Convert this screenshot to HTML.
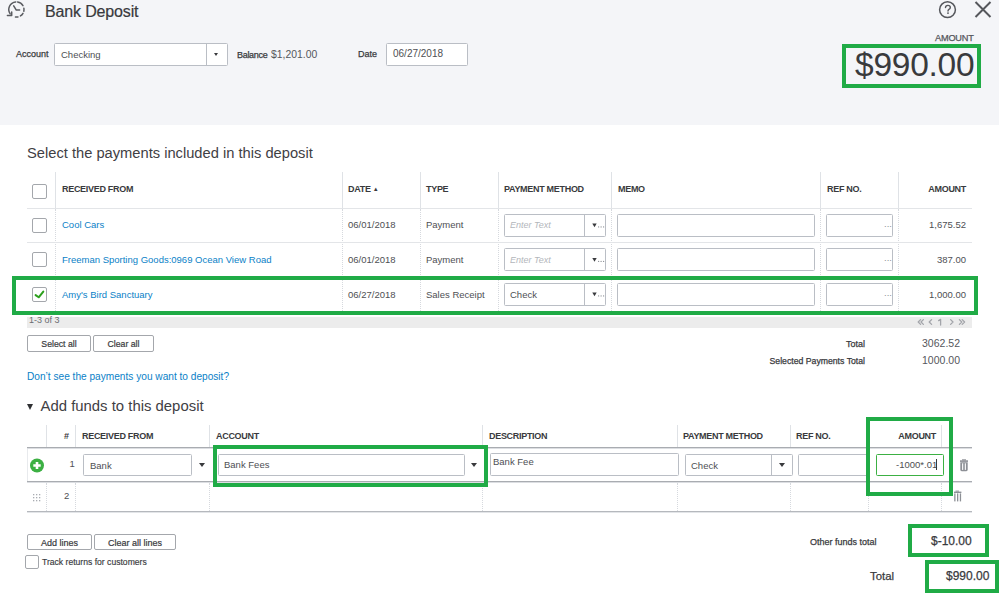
<!DOCTYPE html>
<html><head><meta charset="utf-8">
<style>
*{box-sizing:border-box;margin:0;padding:0}
html,body{width:999px;height:599px;overflow:hidden;background:#fff;font-family:"Liberation Sans",sans-serif;color:#393a3d}
.a{position:absolute;white-space:nowrap}
.r{position:absolute;white-space:nowrap;text-align:right}
#hdr{position:absolute;left:0;top:0;width:999px;height:125px;background:#f4f5f8}
.inp{position:absolute;background:#fff;border:1px solid #babec5;border-radius:1.5px}
.sb{-webkit-text-stroke:0.25px currentColor}
.th{font-size:9px;font-weight:bold;color:#393a3d;letter-spacing:-0.3px}
.td{font-size:9.5px;color:#4e4f53}
.lnk{color:#0a7fc7}
.vl{position:absolute;width:0;border-left:1px dotted #d6d9de}
.vs{position:absolute;width:1px;background:#dfe2e6}
.hl{position:absolute;height:1px;background:#e3e5e8}
.cb{position:absolute;width:15px;height:15px;border:1px solid #a4a7ac;border-radius:2px;background:#fff}
.green{position:absolute;border:4px solid #20ab46}
.btn{position:absolute;border:1px solid #a4a7ac;border-radius:2px;background:#fff;font-size:9px;color:#393a3d;text-align:center;-webkit-text-stroke:0.2px #393a3d}
.arr{position:absolute;width:0;height:0;border-left:3px solid transparent;border-right:3px solid transparent;border-top:4px solid #393a3d}
</style></head><body>
<div id="hdr"></div>

<!-- history icon -->
<svg class="a" style="left:0;top:0" width="30" height="22" viewBox="0 0 30 22">
  <g fill="none" stroke="#595b60" stroke-width="1.5" stroke-linecap="round" stroke-linejoin="round">
    <path d="M15.74 1.93 A7.6 7.6 0 0 0 10.17 13.86"/>
    <path d="M7.4 15.4 H11.7 V12"/>
    <path d="M17.6 1.97 A7.6 7.6 0 0 1 22.98 5.7"/>
    <path d="M23.88 8.18 A7.6 7.6 0 0 1 23.8 11.21"/>
    <path d="M22.98 13.3 A7.6 7.6 0 0 1 20.43 15.95"/>
    <path d="M17.98 16.93 A7.6 7.6 0 0 1 15.47 17.04"/>
    <path d="M13.7 5.9 L16.3 10.1 L19.6 10.1"/>
  </g>
</svg>
<div class="a" style="left:45px;top:3px;font-size:16px;color:#393a3d;letter-spacing:-0.15px;-webkit-text-stroke:0.2px #393a3d">Bank Deposit</div>

<!-- help & close -->
<svg class="a" style="left:937px;top:0" width="22" height="20" viewBox="937 0 22 20">
  <circle cx="947.5" cy="9.7" r="7.9" fill="none" stroke="#55575c" stroke-width="1.5"/>
  <path d="M945.5 7.6 Q945.5 5.4 947.9 5.4 Q950.3 5.4 950.3 7.5 Q950.3 8.7 948.9 9.4 Q948 9.9 948 11" fill="none" stroke="#55575c" stroke-width="1.4" stroke-linecap="round"/>
  <circle cx="948" cy="13.1" r="0.95" fill="#55575c"/>
</svg>
<svg class="a" style="left:972px;top:0" width="24" height="20" viewBox="0 0 24 20">
  <path d="M3.5 2 L18.5 17 M18.5 2 L3.5 17" stroke="#55575c" stroke-width="2"/>
</svg>

<!-- account row -->
<div class="a sb" style="left:16px;top:49px;font-size:9px">Account</div>
<div class="inp" style="left:54px;top:43px;width:174px;height:23px"></div>
<div class="a td" style="left:61px;top:49px">Checking</div>
<div class="a" style="left:206px;top:44px;width:1px;height:21px;background:#babec5"></div>
<div class="arr" style="left:214px;top:53px;border-left-width:2.5px;border-right-width:2.5px;border-top-width:3px"></div>
<div class="a sb" style="left:237px;top:50px;font-size:9px;letter-spacing:-0.3px">Balance</div>
<div class="a" style="left:271px;top:49px;font-size:10.4px;color:#55575c">$1,201.00</div>
<div class="a sb" style="left:358px;top:49px;font-size:9px">Date</div>
<div class="inp" style="left:386px;top:43px;width:82px;height:23px"></div>
<div class="a td" style="left:393px;top:48px;font-size:10px">06/27/2018</div>

<div class="a sb" style="left:935px;top:33px;font-size:9.2px;color:#55575c;letter-spacing:-0.2px">AMOUNT</div>
<div class="green" style="left:842px;top:44px;width:139px;height:44px;border-width:4px"></div>
<div class="a" style="left:855px;top:46px;font-size:33.5px;letter-spacing:-0.25px;color:#393a3d">$990.00</div>

<!-- section 1 -->
<div class="a" style="left:27px;top:145px;font-size:14.7px;color:#3f4044">Select the payments included in this deposit</div>

<!-- table 1 -->
<div class="vs" style="left:55px;top:172px;height:36px"></div><div class="vl" style="left:55px;top:209px;height:104px"></div>
<div class="vs" style="left:342px;top:172px;height:36px"></div><div class="vl" style="left:342px;top:209px;height:104px"></div>
<div class="vs" style="left:420px;top:172px;height:36px"></div><div class="vl" style="left:420px;top:209px;height:104px"></div>
<div class="vs" style="left:498px;top:172px;height:36px"></div><div class="vl" style="left:498px;top:209px;height:104px"></div>
<div class="vs" style="left:611px;top:172px;height:36px"></div><div class="vl" style="left:611px;top:209px;height:104px"></div>
<div class="vs" style="left:820px;top:172px;height:36px"></div><div class="vl" style="left:820px;top:209px;height:104px"></div>
<div class="vs" style="left:898px;top:172px;height:36px"></div><div class="vl" style="left:898px;top:209px;height:104px"></div>
<div class="hl" style="left:27px;top:208px;width:945px"></div>
<div class="hl" style="left:27px;top:242px;width:945px"></div>
<div class="hl" style="left:27px;top:277px;width:945px"></div>

<div class="cb" style="left:32px;top:184px"></div>
<div class="a th" style="left:62px;top:184px">RECEIVED FROM</div>
<div class="a th" style="left:348px;top:184px">DATE <span style="font-size:6px;position:relative;top:-1px">&#9650;</span></div>
<div class="a th" style="left:426px;top:184px">TYPE</div>
<div class="a th" style="left:504px;top:184px">PAYMENT METHOD</div>
<div class="a th" style="left:618px;top:184px">MEMO</div>
<div class="a th" style="left:827px;top:184px">REF NO.</div>
<div class="r th" style="right:33px;top:184px">AMOUNT</div>

<!-- row 1 -->
<div class="cb" style="left:32px;top:218px"></div>
<div class="a td lnk" style="left:62px;top:219px">Cool Cars</div>
<div class="a td" style="left:348px;top:219px">06/01/2018</div>
<div class="a td" style="left:426px;top:219px">Payment</div>
<div class="inp" style="left:504px;top:214px;width:102px;height:23px"></div>
<div class="a" style="left:584px;top:215px;width:1px;height:21px;background:#babec5"></div>
<div class="a" style="left:510px;top:220px;font-style:italic;color:#b3b6bb;font-size:9px">Enter Text</div>
<svg class="a" style="left:590px;top:221px" width="16" height="8" viewBox="590 221 16 8"><path d="M592.3 223.4 H596.7 L594.5 227.3 Z" fill="#393a3d"/><g fill="#8d9096"><circle cx="598.6" cy="226.9" r="0.65"/><circle cx="601.1" cy="226.9" r="0.65"/><circle cx="603.6" cy="226.9" r="0.65"/></g></svg>
<div class="inp" style="left:617px;top:214px;width:198px;height:23px"></div>
<div class="inp" style="left:826px;top:214px;width:67px;height:23px"></div>
<div class="a" style="left:884px;top:218px;color:#8d9096;font-size:9.5px">...</div>
<div class="r td" style="right:33px;top:219px">1,675.52</div>

<!-- row 2 -->
<div class="cb" style="left:32px;top:252px"></div>
<div class="a td lnk" style="left:62px;top:254px">Freeman Sporting Goods:0969 Ocean View Road</div>
<div class="a td" style="left:348px;top:254px">06/01/2018</div>
<div class="a td" style="left:426px;top:254px">Payment</div>
<div class="inp" style="left:504px;top:248px;width:102px;height:23px"></div>
<div class="a" style="left:584px;top:249px;width:1px;height:21px;background:#babec5"></div>
<div class="a" style="left:510px;top:255px;font-style:italic;color:#b3b6bb;font-size:9px">Enter Text</div>
<svg class="a" style="left:590px;top:255px" width="16" height="8" viewBox="590 255 16 8"><path d="M592.3 257.9 H596.7 L594.5 261.8 Z" fill="#393a3d"/><g fill="#8d9096"><circle cx="598.6" cy="261.4" r="0.65"/><circle cx="601.1" cy="261.4" r="0.65"/><circle cx="603.6" cy="261.4" r="0.65"/></g></svg>
<div class="inp" style="left:617px;top:248px;width:198px;height:23px"></div>
<div class="inp" style="left:826px;top:248px;width:67px;height:23px"></div>
<div class="a" style="left:884px;top:252px;color:#8d9096;font-size:9.5px">...</div>
<div class="r td" style="right:33px;top:254px">387.00</div>

<!-- row 3 -->
<div class="cb" style="left:32px;top:287px"></div>
<svg class="a" style="left:32px;top:287px" width="15" height="15" viewBox="0 0 15 15">
  <path d="M3.6 8.1 L6.7 10.3 L11.3 4.6" fill="none" stroke="#2ca01c" stroke-width="2" stroke-linecap="round" stroke-linejoin="round"/>
</svg>
<div class="a td lnk" style="left:62px;top:289px">Amy's Bird Sanctuary</div>
<div class="a td" style="left:348px;top:289px">06/27/2018</div>
<div class="a td" style="left:426px;top:289px">Sales Receipt</div>
<div class="inp" style="left:504px;top:283px;width:102px;height:23px"></div>
<div class="a" style="left:584px;top:284px;width:1px;height:21px;background:#babec5"></div>
<div class="a td" style="left:510px;top:289px">Check</div>
<svg class="a" style="left:590px;top:290px" width="16" height="8" viewBox="590 290 16 8"><path d="M592.3 292.4 H596.7 L594.5 296.3 Z" fill="#393a3d"/><g fill="#8d9096"><circle cx="598.6" cy="295.9" r="0.65"/><circle cx="601.1" cy="295.9" r="0.65"/><circle cx="603.6" cy="295.9" r="0.65"/></g></svg>
<div class="inp" style="left:617px;top:283px;width:198px;height:23px"></div>
<div class="inp" style="left:826px;top:283px;width:67px;height:23px"></div>
<div class="a" style="left:884px;top:287px;color:#8d9096;font-size:9.5px">...</div>
<div class="r td" style="right:33px;top:289px">1,000.00</div>

<div class="green" style="left:12px;top:276px;width:966px;height:39px"></div>

<!-- pagination -->
<div class="a" style="left:27px;top:317px;width:945px;height:11px;background:#ececec"></div>
<div class="a" style="left:29px;top:315px;font-size:9px;color:#6b6c72">1-3 of 3</div>
<svg class="a" style="left:910px;top:316px" width="62" height="12" viewBox="910 316 62 12">
<g fill="none" stroke="#a3a5aa" stroke-width="1.3" stroke-linecap="round" stroke-linejoin="round">
<path d="M920.6 319.6 L918.2 322 L920.6 324.4 M923.4 319.6 L921 322 L923.4 324.4"/>
<path d="M931.6 319.6 L929.2 322 L931.6 324.4"/>
<path d="M938.6 320.6 L940.6 319.4 V325"/>
<path d="M950.6 319.6 L953 322 L950.6 324.4"/>
<path d="M959.4 319.6 L961.8 322 L959.4 324.4 M962.2 319.6 L964.6 322 L962.2 324.4"/>
</g></svg>

<div class="btn" style="left:27px;top:335px;width:64px;height:17px;line-height:17px;font-size:8.7px">Select all</div>
<div class="btn" style="left:93px;top:335px;width:61px;height:17px;line-height:17px;font-size:8.7px">Clear all</div>

<div class="r sb" style="right:134px;top:339px;font-size:9px">Total</div>
<div class="r" style="right:39px;top:337px;font-size:10.5px;color:#55575c">3062.52</div>
<div class="r sb" style="right:134px;top:356px;font-size:8.7px">Selected Payments Total</div>
<div class="r" style="right:39px;top:354px;font-size:10.5px;color:#55575c">1000.00</div>

<div class="a lnk" style="left:27px;top:371px;font-size:10.15px">Don&rsquo;t see the payments you want to deposit?</div>

<!-- add funds -->
<div class="arr" style="left:27px;top:404px;border-left-width:3.2px;border-right-width:3.2px;border-top-width:6px;border-top-color:#2f3033"></div>
<div class="a" style="left:40.5px;top:398px;font-size:14.9px;color:#3f4044">Add funds to this deposit</div>

<div class="vs" style="left:46px;top:425px;height:22px"></div>
<div class="vs" style="left:75px;top:425px;height:22px"></div>
<div class="vs" style="left:209px;top:425px;height:22px"></div>
<div class="vs" style="left:482px;top:425px;height:22px"></div>
<div class="vs" style="left:677px;top:425px;height:22px"></div>
<div class="vs" style="left:790px;top:425px;height:22px"></div>
<div class="vs" style="left:868px;top:425px;height:22px"></div>
<div class="vs" style="left:941px;top:425px;height:22px"></div>

<div class="vl" style="left:46px;top:483px;height:28px"></div>
<div class="vl" style="left:75px;top:483px;height:28px"></div>
<div class="vl" style="left:209px;top:483px;height:28px"></div>
<div class="vl" style="left:482px;top:483px;height:28px"></div>
<div class="vl" style="left:677px;top:483px;height:28px"></div>
<div class="vl" style="left:790px;top:483px;height:28px"></div>
<div class="vl" style="left:868px;top:483px;height:28px"></div>
<div class="vl" style="left:941px;top:483px;height:28px"></div>

<div class="a" style="left:27px;top:449px;width:1px;height:32px;background:#e8eaed"></div>
<div class="a" style="left:27px;top:447px;width:945px;height:2px;border-top:1px solid #a9acb1;background:#dcdee2"></div>
<div class="a" style="left:27px;top:481px;width:945px;height:2px;border-top:1px solid #a9acb1;background:#dcdee2"></div>
<div class="a" style="left:27px;top:511px;width:945px;height:2px;border-top:1px solid #b5b8bd;background:#e3e5e8"></div>

<div class="a th" style="left:64px;top:431px">#</div>
<div class="a th" style="left:82px;top:431px">RECEIVED FROM</div>
<div class="a th" style="left:216px;top:431px">ACCOUNT</div>
<div class="a th" style="left:489px;top:431px">DESCRIPTION</div>
<div class="a th" style="left:683px;top:431px">PAYMENT METHOD</div>
<div class="a th" style="left:796px;top:431px">REF NO.</div>
<div class="r th" style="right:63px;top:431px">AMOUNT</div>

<!-- add row 1 -->
<svg class="a" style="left:29px;top:458px" width="16" height="16" viewBox="0 0 16 16">
  <circle cx="8" cy="7.5" r="7" fill="#3cb043"/>
  <path d="M8 3.9 V11.1 M4.3 7.5 H11.7" stroke="#fff" stroke-width="2.6"/>
</svg>
<div class="a td" style="left:69.5px;top:458px">1</div>
<div class="inp" style="left:83px;top:454px;width:109px;height:22px"></div>
<div class="a td" style="left:90px;top:460px">Bank</div>
<div class="arr" style="left:199px;top:463px"></div>
<div class="inp" style="left:218px;top:454px;width:247px;height:22px"></div>
<div class="a td" style="left:224px;top:459px">Bank Fees</div>
<div class="arr" style="left:471px;top:463px"></div>
<div class="inp" style="left:490px;top:453px;width:189px;height:23px"></div>
<div class="a td" style="left:493px;top:456px">Bank Fee</div>
<div class="inp" style="left:685px;top:454px;width:108px;height:22px"></div>
<div class="a" style="left:771px;top:455px;width:1px;height:20px;background:#babec5"></div>
<div class="a td" style="left:691px;top:460px">Check</div>
<div class="arr" style="left:779px;top:463px"></div>
<div class="inp" style="left:798px;top:454px;width:72px;height:22px"></div>
<div class="inp" style="left:876px;top:454px;width:68px;height:22px;border-color:#3cb043"></div>
<div class="a td" style="left:896px;top:459px">-1000*.01</div>
<div class="a" style="left:936px;top:459px;width:1px;height:11px;background:#393a3d"></div>
<div class="green" style="left:213px;top:445px;width:275px;height:42px"></div>
<div class="green" style="left:866px;top:417px;width:87px;height:79px;border-width:4px"></div>

<!-- trash icons -->
<svg class="a" style="left:958px;top:458px" width="12" height="15" viewBox="958 458 12 15">
  <g fill="#8d9096">
    <rect x="962" y="459.3" width="4" height="1.2"/>
    <rect x="960" y="460.3" width="8" height="1.6"/>
    <path d="M960.3 462.3 H967.7 V469.8 Q967.7 471.2 966.3 471.2 H961.7 Q960.3 471.2 960.3 469.8 Z"/>
  </g>
  <g fill="#fff"><rect x="962.1" y="463.3" width="1.1" height="6.6"/><rect x="964.8" y="463.3" width="1.1" height="6.6"/></g>
</svg>
<svg class="a" style="left:952px;top:489px" width="12" height="14" viewBox="952 489 12 14">
  <g fill="#8d9096">
    <rect x="955.5" y="490.6" width="3.5" height="1"/>
    <rect x="954" y="491.6" width="7.4" height="1.4"/>
    <rect x="954.2" y="493.4" width="1.3" height="8"/>
    <rect x="957" y="493.4" width="1.3" height="8"/>
    <rect x="959.8" y="493.4" width="1.3" height="8"/>
  </g>
</svg>

<!-- add row 2 -->
<svg class="a" style="left:33px;top:494px" width="8" height="8" viewBox="0 0 8 8">
  <g fill="#a9acb2"><rect x="0" y="0" width="1.3" height="1.3"/><rect x="3" y="0" width="1.3" height="1.3"/><rect x="6" y="0" width="1.3" height="1.3"/>
  <rect x="0" y="3" width="1.3" height="1.3"/><rect x="3" y="3" width="1.3" height="1.3"/><rect x="6" y="3" width="1.3" height="1.3"/>
  <rect x="0" y="6" width="1.3" height="1.3"/><rect x="3" y="6" width="1.3" height="1.3"/><rect x="6" y="6" width="1.3" height="1.3"/></g>
</svg>
<div class="a td" style="left:64px;top:490px">2</div>

<!-- bottom buttons -->
<div class="btn" style="left:27px;top:534px;width:65px;height:16px;line-height:16px">Add lines</div>
<div class="btn" style="left:94px;top:534px;width:82px;height:16px;line-height:16px">Clear all lines</div>
<div class="cb" style="left:25px;top:555px;width:14px;height:14px"></div>
<div class="a" style="left:42px;top:557px;font-size:8.6px;-webkit-text-stroke:0.15px #393a3d">Track returns for customers</div>

<div class="a sb" style="left:810px;top:537px;font-size:9px">Other funds total</div>
<div class="green" style="left:908px;top:524px;width:81px;height:33px"></div>
<div class="a sb" style="left:931px;top:534px;font-size:12px">$-10.00</div>
<div class="a sb" style="left:870px;top:570px;font-size:11.4px">Total</div>
<div class="green" style="left:925px;top:560px;width:74px;height:33px"></div>
<div class="a sb" style="left:946px;top:569px;font-size:12px">$990.00</div>

</body></html>
